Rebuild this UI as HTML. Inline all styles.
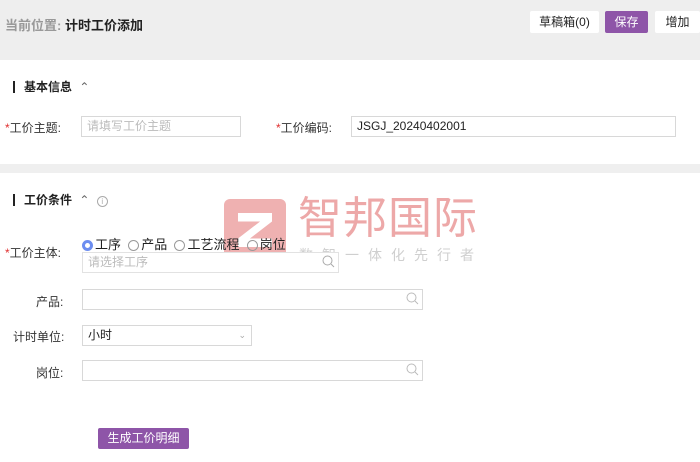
<!DOCTYPE html>
<html><head><meta charset="utf-8"><style>
body{margin:0;width:700px;height:462px;position:relative;background:#fff;font-family:"Liberation Sans","Noto Sans CJK SC",sans-serif;font-size:12px;color:#222;overflow:hidden}
.a{position:absolute}
.hdr{left:0;top:0;width:700px;height:60px;background:#eeeeee}
.btn{position:absolute;top:11px;height:22px;line-height:22px;text-align:center;background:#fff;border-radius:2px;font-size:12px;color:#222}
.inp{position:absolute;border:1px solid #d8d8d8;background:#fff;box-sizing:border-box;height:21px;line-height:19px;padding-left:5px;font-size:12px}
.lbl{position:absolute;text-align:right;font-size:12px;color:#333}
.r{color:#e03030}
.sec{position:absolute;left:13px;font-weight:bold;font-size:12px;color:#222}
.sec:before{content:"";display:inline-block;width:2px;height:12px;background:#222;vertical-align:-2px;margin-right:9px}
.mag{position:absolute;right:3px;top:2px}
.rad{display:inline-block;width:11px;height:11px;border:1px solid #999;border-radius:50%;vertical-align:-2px;margin-right:2px;box-sizing:border-box}
</style></head><body>
<div class="a hdr"></div>
<div class="a" style="left:5px;top:15px;font-weight:bold;color:#999;font-size:13px">当前位置: <span style="color:#222">计时工价添加</span></div>
<div class="btn" style="left:530px;width:69px">草稿箱(0)</div>
<div class="btn" style="left:605px;width:43px;background:#8e55a8;color:#fff">保存</div>
<div class="btn" style="left:655px;width:45px">增加</div>

<div class="sec" style="top:78px">基本信息 <span style="font-weight:normal;color:#666;margin-left:4px">&#8963;</span></div>
<div class="lbl" style="left:5px;top:119px"><span class="r">*</span>工价主题:</div>
<div class="inp" style="left:81px;top:116px;width:160px;color:#bbb">请填写工价主题</div>
<div class="lbl" style="left:276px;top:119px"><span class="r">*</span>工价编码:</div>
<div class="inp" style="left:351px;top:116px;width:325px">JSGJ_20240402001</div>

<div class="a" style="left:0;top:164px;width:700px;height:9px;background:#efefef"></div>

<div class="sec" style="top:191px">工价条件 <span style="font-weight:normal;color:#666;margin-left:4px">&#8963;</span> <span style="display:inline-block;width:9px;height:9px;border:1px solid #aaa;border-radius:50%;font-size:8px;line-height:9px;text-align:center;color:#aaa;font-weight:normal;margin-left:4px">i</span></div>

<div class="a" style="left:224px;top:199px;width:62px;height:62px;background:#eda8a8;border-radius:6px;opacity:.9"></div>
<div class="a" style="left:238px;top:213px;width:34px;height:34px;background:#fff;clip-path:polygon(0 0,100% 0,100% 25%,35% 75%,100% 75%,100% 100%,0 100%,0 75%,65% 25%,0 25%)"></div>
<div class="a" style="left:298px;top:194px;font-size:44px;color:#eda8a8;letter-spacing:1px;line-height:50px">智邦国际</div>
<div class="a" style="left:299px;top:245px;font-size:14px;color:#cfcfcf;letter-spacing:9px">数智一体化先行者</div>

<div class="lbl" style="left:5px;top:244px"><span class="r">*</span>工价主体:</div>
<div class="a" style="left:82px;top:234px;font-size:13px"><span class="rad" style="border:3px solid #6c8df0"></span>工序&nbsp;&nbsp;<span class="rad"></span>产品&nbsp;&nbsp;<span class="rad"></span>工艺流程&nbsp;&nbsp;<span class="rad"></span>岗位</div>
<div class="inp" style="left:82px;top:252px;width:257px;color:#bbb;border-color:#e2e2e2">请选择工序<svg class="mag" width="13" height="13"><circle cx="5.5" cy="5.5" r="4.5" fill="none" stroke="#aaa"/><line x1="9" y1="9" x2="12" y2="12" stroke="#aaa"/></svg></div>

<div class="lbl" style="left:36px;top:293px">产品:</div>
<div class="inp" style="left:82px;top:289px;width:341px"><svg class="mag" width="13" height="13"><circle cx="5.5" cy="5.5" r="4.5" fill="none" stroke="#bbb"/><line x1="9" y1="9" x2="12" y2="12" stroke="#bbb"/></svg></div>
<div class="lbl" style="left:13px;top:328px">计时单位:</div>
<div class="inp" style="left:82px;top:325px;width:170px">小时<span style="position:absolute;right:5px;top:0;color:#aaa;font-size:9px">&#8964;</span></div>
<div class="lbl" style="left:36px;top:364px">岗位:</div>
<div class="inp" style="left:82px;top:360px;width:341px"><svg class="mag" width="13" height="13"><circle cx="5.5" cy="5.5" r="4.5" fill="none" stroke="#bbb"/><line x1="9" y1="9" x2="12" y2="12" stroke="#bbb"/></svg></div>

<div class="a" style="left:98px;top:428px;width:91px;height:21px;line-height:21px;background:#8e55a8;color:#fff;text-align:center;border-radius:2px;font-size:12px">生成工价明细</div>
</body></html>
